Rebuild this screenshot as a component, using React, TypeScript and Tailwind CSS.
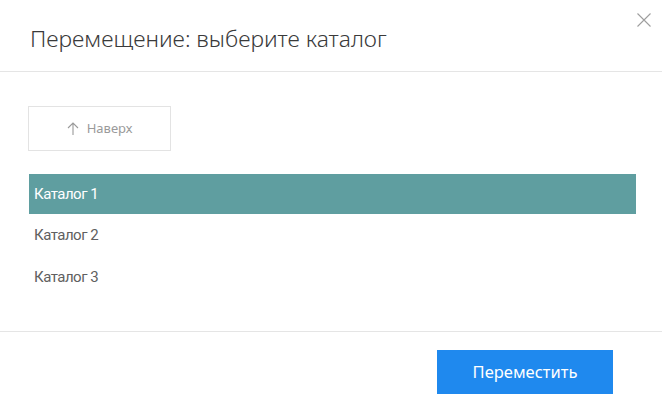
import React from "react";

export default function App() {
  return (
    <div className="w-[662px] h-[406px] bg-white relative overflow-hidden" style={{ fontFamily: '"Noto Sans", "Open Sans", sans-serif' }}>
      <button className="absolute right-[11px] top-[13px] w-[14px] h-[14px] text-[#9e9e9e]">
        <svg width="14" height="14" viewBox="0 0 14 14" fill="none" stroke="currentColor" strokeWidth="1.1">
          <path d="M0.5 0.5 L13.5 13.5 M13.5 0.5 L0.5 13.5" />
        </svg>
      </button>
      <div className="h-[71px] flex items-center pl-[30px] border-b border-[#e5e5e5] box-content">
        <h1 className="text-[22.8px] text-[#3a3a3a] leading-none pt-[7px] font-light">Перемещение: выберите каталог</h1>
      </div>
      <div className="pl-[28px] pr-[26px] pt-[34px] h-[259px]">
        <button className="w-[143px] h-[45px] border border-[#e3e3e3] flex items-center justify-center gap-[8px] text-[#9a9a9a] text-[13px]">
          <svg width="12" height="13" viewBox="0 0 12 13" fill="none" stroke="currentColor" strokeWidth="1.1">
            <path d="M6 13 V1 M1 6 L6 1 L11 6" />
          </svg>
          <span>Наверх</span>
        </button>
        <div className="mt-[23px] ml-[1px] flex flex-col" style={{ fontFamily: 'Roboto, sans-serif' }}>
          <div className="h-[40px] bg-[#5f9ea0] text-white text-[15px] tracking-[-0.5px] flex items-center pl-[5px]">Каталог 1</div>
          <div className="h-[42px] text-[#606060] text-[15px] tracking-[-0.5px] flex items-center pl-[5px]">Каталог 2</div>
          <div className="h-[42px] text-[#606060] text-[15px] tracking-[-0.5px] flex items-center pl-[5px]">Каталог 3</div>
        </div>
      </div>
      <div className="border-t border-[#e5e5e5] pt-[18px] pr-[49px] flex justify-end">
        <button className="w-[176px] h-[44px] bg-[#1f89ee] text-white text-[16.5px] flex items-center justify-center">Переместить</button>
      </div>
    </div>
  );
}
